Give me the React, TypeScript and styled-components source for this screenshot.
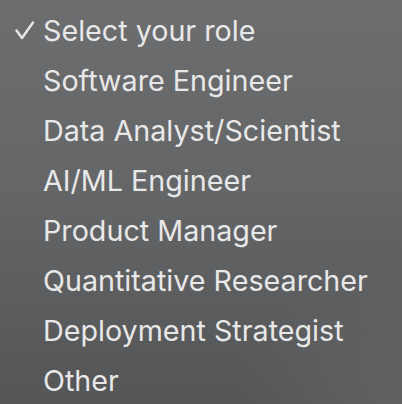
import React from 'react';
import styled, { createGlobalStyle } from 'styled-components';

const GlobalStyle = createGlobalStyle`
  html, body {
    margin: 0;
    padding: 0;
  }
  body {
    font-family: Inter, "Liberation Sans", sans-serif;
  }
`;

const Menu = styled.ul`
  width: 402px;
  height: 404px;
  margin: 0;
  padding: 5px 0 0 0;
  box-sizing: border-box;
  list-style: none;
  overflow: hidden;
  background:
    radial-gradient(ellipse 60% 50% at 100% 100%, rgba(120, 120, 120, 0.35), transparent 70%),
    linear-gradient(180deg, #6c6d6f 0%, #656668 45%, #545556 100%);
`;

const Option = styled.li`
  display: flex;
  align-items: center;
  height: 50px;
  color: #e8e8e8;
  font-size: 28.7px;
`;

const Check = styled.span<{ $on: boolean }>`
  width: 43px;
  flex: 0 0 43px;
  display: flex;
  justify-content: flex-start;
  padding-left: 15px;
  box-sizing: border-box;
  visibility: ${(p) => (p.$on ? 'visible' : 'hidden')};
`;

const roles = [
  'Select your role',
  'Software Engineer',
  'Data Analyst/Scientist',
  'AI/ML Engineer',
  'Product Manager',
  'Quantitative Researcher',
  'Deployment Strategist',
  'Other',
];

const CheckIcon = () => (
  <svg width="20" height="19" viewBox="0 0 20 19" fill="none">
    <path d="M1.5 9.5 L7 17 L18 1.5" stroke="#e8e8e8" strokeWidth="2.4" strokeLinecap="round" strokeLinejoin="round" />
  </svg>
);

const App = () => {
  return (
    <>
      <GlobalStyle />
      <Menu>
        {roles.map((role, i) => (
          <Option key={role}>
            <Check $on={i === 0}>
              <CheckIcon />
            </Check>
            {role}
          </Option>
        ))}
      </Menu>
    </>
  );
};

export default App;
